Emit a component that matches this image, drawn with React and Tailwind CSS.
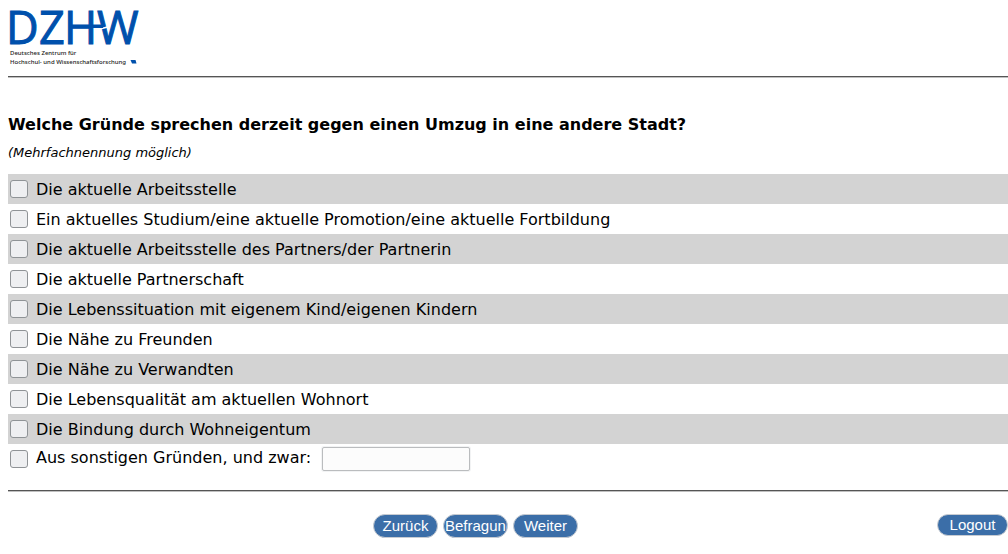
import React from "react";

const reasons = [
  "Die aktuelle Arbeitsstelle",
  "Ein aktuelles Studium/eine aktuelle Promotion/eine aktuelle Fortbildung",
  "Die aktuelle Arbeitsstelle des Partners/der Partnerin",
  "Die aktuelle Partnerschaft",
  "Die Lebenssituation mit eigenem Kind/eigenen Kindern",
  "Die Nähe zu Freunden",
  "Die Nähe zu Verwandten",
  "Die Lebensqualität am aktuellen Wohnort",
  "Die Bindung durch Wohneigentum",
];

const checkboxClass =
  "size-[18px] shrink-0 appearance-none rounded-[3px] border border-[#8f9396] bg-[#eeeff1] checked:bg-[#3b6ea5]";

const buttonClass =
  "flex items-center overflow-hidden whitespace-nowrap rounded-full border border-[#c8ccd2] bg-[#3b6ea8] font-['Liberation_Sans',sans-serif] text-[15px] leading-5 text-white";

function Logo() {
  return (
    <svg
      className="block overflow-visible"
      width="136"
      height="60"
      viewBox="0 0 136 60"
      role="img"
      aria-label="DZHW"
    >
      <text
        x="-2 31 56 89"
        y="36"
        fill="#0050ac"
        stroke="#0050ac"
        strokeWidth="1"
        fontFamily="'Open Sans', sans-serif"
        fontSize="45"
      >
        DZHW
      </text>
      <path d="M91 21.200l8.500 -2.200" fill="none" stroke="#fff" strokeWidth="1.500" />
      <rect x="84" y="16.500" width="11" height="3.500" fill="#0050ac" />
      <g fill="#1a1a1a" fontFamily="'Noto Sans', sans-serif" fontSize="6" fontWeight="500">
        <text x="2" y="47">Deutsches Zentrum für</text>
        <text x="2" y="56">Hochschul- und Wissenschaftsforschung</text>
      </g>
      <path d="M122.500 52h5l1 3.500h-4.500z" fill="#0050ac" />
    </svg>
  );
}

function Rule() {
  return <hr className="h-0.5 border-t border-b border-t-[#555] border-b-[#c0c0c0]" />;
}

export default function App() {
  return (
    <main className="bg-white pt-2 pl-2 font-['DejaVu_Sans',sans-serif] text-base text-black">
      <header className="pb-2">
        <Logo />
      </header>
      <Rule />
      <form onSubmit={(e) => e.preventDefault()}>
        <fieldset>
          <legend className="pt-[37px] text-base leading-5 font-bold">
            Welche Gründe sprechen derzeit gegen einen Umzug in eine andere Stadt?
          </legend>
          <p className="mt-2 mb-[11px] text-[13px] leading-5 italic">(Mehrfachnennung möglich)</p>
          <ul>
            {reasons.map((reason, i) => (
              <li key={reason} className="odd:bg-[#d3d3d3]">
                <label className="flex h-[30px] items-center gap-2 pl-0.5" htmlFor={`reason-${i}`}>
                  <input id={`reason-${i}`} type="checkbox" className={checkboxClass} />
                  <span className="pt-0.5">{reason}</span>
                </label>
              </li>
            ))}
            <li className="flex h-[30px] items-center gap-2 pl-0.5">
              <input id="other" type="checkbox" className={checkboxClass} />
              <label htmlFor="other" className="min-w-[278px] pb-0.5">
                Aus sonstigen Gründen, und zwar:
              </label>
              <input
                type="text"
                aria-label="Sonstige Gründe"
                className="h-6 w-[148px] rounded-xs border border-[#babcbe] bg-[#fcfcfc] px-1 text-sm shadow-[0_0_0_1px_#f2f3f4]"
              />
            </li>
          </ul>
        </fieldset>
        <div className="pt-4">
          <Rule />
        </div>
        <div className="flex items-start pt-[22px]">
          <div className="flex flex-1 justify-center gap-[5px] pl-1.5">
            <button type="submit" className={`${buttonClass} h-6 w-[65px] justify-center`}>Zurück</button>
            <button type="button" className={`${buttonClass} h-6 w-[65px] justify-start pl-px`}>Befragung</button>
            <button type="submit" className={`${buttonClass} h-6 w-[65px] justify-center`}>Weiter</button>
          </div>
          <button type="button" className={`${buttonClass} h-[22px] w-[71px] justify-center`}>Logout</button>
        </div>
      </form>
    </main>
  );
}
